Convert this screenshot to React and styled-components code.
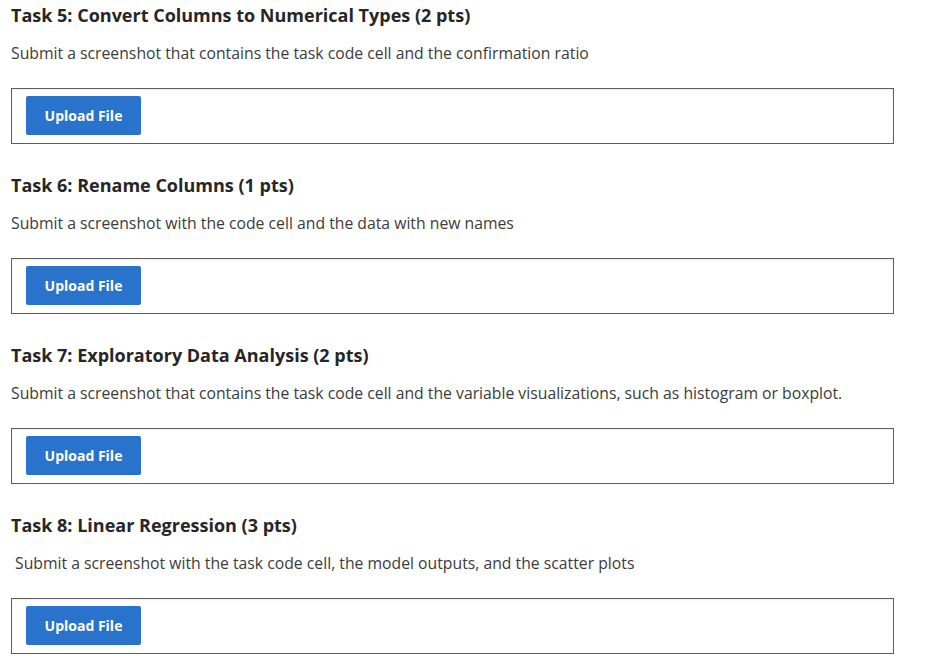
import styled, { createGlobalStyle } from "styled-components";

const GlobalStyle = createGlobalStyle`
    body {
        margin: 0;
        background: #fff;
        font-family: "Open Sans", "Liberation Sans", sans-serif;
    }
`;

const Page = styled.div`
    display: flex;
    flex-direction: column;
    padding: 3px 0 0 11px;
`;

const Section = styled.section`
    display: flex;
    flex-direction: column;
    height: 170px;
`;

const Title = styled.h2`
    margin: 0;
    font-size: 18px;
    line-height: 24px;
    font-weight: 700;
    color: #262626;
`;

const Description = styled.p`
    margin: 15px 0 0;
    padding-left: ${(p) => (p.indent ? "4px" : "0")};
    font-size: 15.75px;
    line-height: 22px;
    color: #3b3b3b;
`;

const UploadBox = styled.div`
    display: flex;
    align-items: center;
    box-sizing: border-box;
    width: 883px;
    height: 56px;
    margin-top: 24px;
    padding: 0 14px;
    border: 1px solid #5e5e5e;
    box-shadow: inset 0 1px 2px rgba(0, 0, 0, 0.08);
`;

const UploadButton = styled.button`
    width: 115px;
    height: 39px;
    margin-bottom: 1px;
    border: none;
    border-radius: 2px;
    background: #2a73cc;
    color: #fff;
    font-family: "Open Sans", "Liberation Sans", sans-serif;
    font-size: 14px;
    font-weight: 700;
    cursor: pointer;
`;

const tasks = [
    {
        title: "Task 5: Convert Columns to Numerical Types (2 pts)",
        text: "Submit a screenshot that contains the task code cell and the confirmation ratio",
    },
    {
        title: "Task 6: Rename Columns (1 pts)",
        text: "Submit a screenshot with the code cell and the data with new names",
    },
    {
        title: "Task 7: Exploratory Data Analysis (2 pts)",
        text: "Submit a screenshot that contains the task code cell and the variable visualizations, such as histogram or boxplot.",
    },
    {
        title: "Task 8: Linear Regression (3 pts)",
        text: "Submit a screenshot with the task code cell, the model outputs, and the scatter plots",
        indent: true,
    },
];

const App = () => {
    return (
        <>
            <GlobalStyle />
            <Page>
                {tasks.map((task) => (
                    <Section key={task.title}>
                        <Title>{task.title}</Title>
                        <Description indent={task.indent}>{task.text}</Description>
                        <UploadBox>
                            <UploadButton>Upload File</UploadButton>
                        </UploadBox>
                    </Section>
                ))}
            </Page>
        </>
    );
};

export default App;
